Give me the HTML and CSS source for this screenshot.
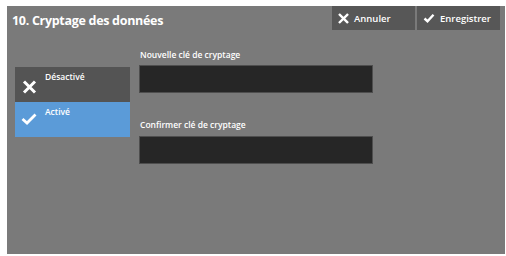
FILE: index.html
```html
<!DOCTYPE html>
<html lang="fr">
<head>
  <meta charset="UTF-8" />
  <title>Cryptage des données</title>
  <link rel="stylesheet" href="styles.css">
</head>
<body>
  <div class="panel">
    <div class="header">
      <h2>10. Cryptage des données</h2>
      <div class="actions">
        <button class="act-btn">
          <svg width="11" height="11" viewBox="0 0 12 12"><path d="M2 2L10 10M10 2L2 10" stroke="#fff" stroke-width="2.6" stroke-linecap="square"/></svg>
          Annuler
        </button>
        <button class="act-btn">
          <svg width="12" height="10" viewBox="0 0 12 10"><path d="M1.5 5.5L4.5 8.2L10.5 1.8" stroke="#fff" stroke-width="2.4" fill="none"/></svg>
          Enregistrer
        </button>
      </div>
    </div>

    <div class="content">
      <div class="options">
        <div class="option">
          <svg class="opt-icon" width="15" height="14" viewBox="0 0 15 14"><path d="M2 1.5L13 12.5M13 1.5L2 12.5" stroke="#fff" stroke-width="3"/></svg>
          <span>Désactivé</span>
        </div>
        <div class="option selected">
          <svg class="opt-icon" width="16" height="12" viewBox="0 0 16 12"><path d="M1.5 6L6 10L14.5 1.5" stroke="#fff" stroke-width="2.8" fill="none"/></svg>
          <span>Activé</span>
        </div>
      </div>

      <div class="fields">
        <label>Nouvelle clé de cryptage</label>
        <div class="field"></div>
        <label class="second">Confirmer clé de cryptage</label>
        <div class="field"></div>
      </div>
    </div>
  </div>
</body>
</html>
```

FILE: styles.css
```css
* {
  box-sizing: border-box;
  margin: 0;
  padding: 0;
}

body {
  font-family: 'Open Sans', 'Noto Sans', sans-serif;
  background: #fff;
  padding: 6px 1px 2px 7px;
}

.panel {
  background: #7a7a7a;
  width: 498px;
  height: 248px;
  color: #fff;
}

.header {
  display: flex;
  justify-content: space-between;
  align-items: flex-start;
  height: 30px;
}

.header h2 {
  font-size: 12.5px;
  font-weight: 700;
  letter-spacing: -0.3px;
  padding: 6px 0 0 5px;
}

.actions {
  display: flex;
  gap: 2px;
  padding-right: 5px;
}

.act-btn {
  width: 83px;
  height: 24px;
  background: #575757;
  border: none;
  color: #fff;
  font-family: inherit;
  font-size: 9.5px;
  font-weight: 600;
  display: flex;
  align-items: center;
  justify-content: flex-start;
  padding-left: 6px;
  gap: 5px;
}

.content {
  display: flex;
  padding-left: 8px;
}

.options {
  width: 115px;
  margin-top: 31px;
}

.option {
  height: 35px;
  background: #545454;
  display: flex;
  align-items: flex-start;
  position: relative;
  font-size: 8.5px;
  font-weight: 600;
}

.option span {
  margin-left: 30px;
  margin-top: 4px;
}

.option.selected {
  background: #5b9bd8;
}

.opt-icon {
  position: absolute;
  left: 7px;
  top: 13px;
}

.option.selected .opt-icon {
  left: 6px;
  top: 11px;
}

.fields {
  margin-left: 9px;
  margin-top: 13px;
  width: 234px;
}

.fields label {
  display: block;
  font-size: 8.5px;
  font-weight: 600;
  height: 16px;
  padding-left: 1px;
}

.fields label.second {
  margin-top: 26px;
  height: 17px;
}

.field {
  height: 28px;
  background: #262626;
  border: 1px solid #4e4e4e;
}
```
